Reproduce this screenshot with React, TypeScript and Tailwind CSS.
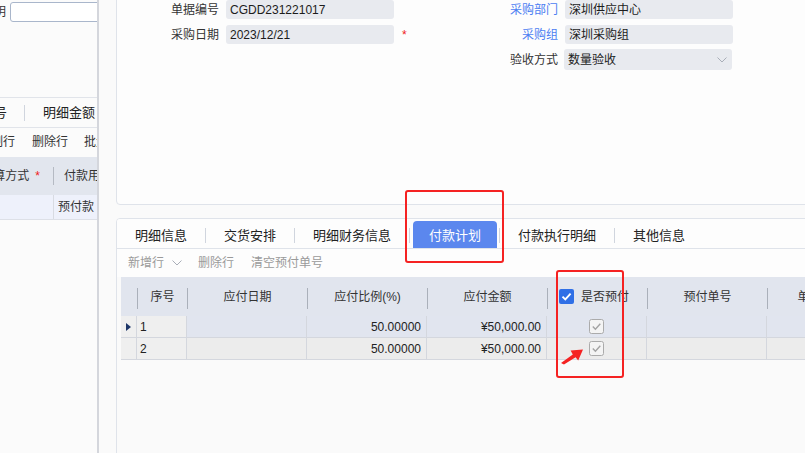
import React from "react";

const F = "font-['Liberation_Sans','Noto_Sans_CJK_SC',sans-serif]";

function Chevron({ className }: { className?: string }) {
  return (
    <svg className={className} width="10" height="6" viewBox="0 0 10 6">
      <polyline points="0.5,0.5 5,5 9.5,0.5" fill="none" stroke="#a9aeb8" strokeWidth="1" />
    </svg>
  );
}

function CheckOn() {
  return (
    <svg width="15" height="15" viewBox="0 0 15 15">
      <rect x="0" y="0" width="15" height="15" rx="2" fill="#2f6fe6" />
      <polyline points="3.5,7.6 6.3,10.4 11.6,4.6" fill="none" stroke="#fff" strokeWidth="1.9" />
    </svg>
  );
}

function CheckDisabled() {
  return (
    <svg width="15" height="15" viewBox="0 0 15 15">
      <rect x="0.5" y="0.5" width="14" height="14" rx="2" fill="#f4f4f4" stroke="#ababab" />
      <polyline points="3.8,7.6 6.4,10.2 11.3,4.8" fill="none" stroke="#a3a3a3" strokeWidth="1.4" />
    </svg>
  );
}

const cols = [16, 50, 120, 120, 120, 100, 120, 120];

function Field({ label, value, blue }: { label: string; value: string; blue?: boolean }) {
  return (
    <>
      <span className={`w-[79px] text-right whitespace-nowrap ${blue ? "text-[#4b7df2]" : "text-[#333]"}`}>{label}</span>
      <div className="ml-[7px] w-[168px] h-[19px] bg-[#e8eaef] rounded-[3px] pl-[4px] flex items-center text-[#1c1c1c] whitespace-nowrap">
        {value}
      </div>
    </>
  );
}

export default function App() {
  const headers = ["", "序号", "应付日期", "应付比例(%)", "应付金额", "CHK", "预付单号", "单据明细号"];
  const rows = [
    { n: "1", pct: "50.00000", amt: "¥50,000.00", sel: true },
    { n: "2", pct: "50.00000", amt: "¥50,000.00", sel: false },
  ];
  return (
    <div className={`relative w-[805px] h-[453px] overflow-hidden flex bg-[#fafafa] text-[12px] text-[#333] ${F}`}>
      {/* Left panel */}
      <div className="w-[99px] shrink-0 h-full border-r-2 border-[#d4d6dc] bg-[#fbfbfb] overflow-hidden">
        <div className="flex items-center h-[20px] mt-[2px] -ml-[19px]">
          <span className="w-[25px] shrink-0 text-right whitespace-nowrap">说明</span>
          <div className="ml-[4px] w-[120px] shrink-0 h-[20px] border border-[#a9b6cb] rounded-[3px] bg-white" />
        </div>
        <div className="mt-[75px] h-[31px] border-y border-[#e1e4ea] flex items-center text-[13px] text-[#222] whitespace-nowrap">
          <span className="-ml-[19px] pr-[17px]">行号</span>
          <span className="w-[1px] h-[16px] bg-[#d0d5de] shrink-0" />
          <span className="pl-[18px]">明细金额</span>
        </div>
        <div className="h-[27px] flex items-center whitespace-nowrap text-[#333]">
          <span className="-ml-[21px]">复制行</span>
          <span className="ml-[17px]">删除行</span>
          <span className="ml-[16px]">批量修改</span>
        </div>
        <div className="mt-[2px] h-[38px] bg-[#e2e6ee] flex items-center whitespace-nowrap">
          <div className="w-[53px] shrink-0 flex justify-end pr-[13px]">
            <span>结算方式</span>
            <span className="ml-[6px] text-[#f02020]">*</span>
          </div>
          <span className="w-[1px] h-[18px] bg-[#b5bac3] shrink-0" />
          <span className="pl-[10px]">付款用途</span>
        </div>
        <div className="h-[25px] bg-[#eef1fb] border-b border-[#dde0e7] flex whitespace-nowrap">
          <div className="w-[54px] shrink-0 border-r border-[#d8dbe2]" />
          <span className="pl-[4px] flex items-center">预付款</span>
        </div>
      </div>

      <div className="w-[17px] shrink-0" />

      {/* Right column */}
      <div className="w-[700px] shrink-0 flex flex-col">
        {/* Top card */}
        <div className="-mt-[6px] h-[211px] border border-[#dfe3ea] rounded-[4px] bg-[#fdfdfd] pt-[5px] pl-[23px] shrink-0">
          <div className="flex items-center h-[19px]">
            <Field label="单据编号" value="CGDD231221017" />
            <span className="w-[85px] shrink-0" />
            <Field label="采购部门" value="深圳供应中心" blue />
          </div>
          <div className="flex items-center h-[19px] mt-[6px]">
            <Field label="采购日期" value="2023/12/21" />
            <span className="w-[85px] shrink-0 pl-[8px] text-[#f02020]">*</span>
            <Field label="采购组" value="深圳采购组" blue />
          </div>
          <div className="flex items-center h-[21px] mt-[5px]">
            <span className="w-[339px] shrink-0" />
            <span className="w-[79px] text-right whitespace-nowrap">验收方式</span>
            <div className="ml-[6px] w-[168px] h-[21px] bg-[#e8eaef] rounded-[3px] pl-[4px] pr-[5px] flex items-center justify-between text-[#1c1c1c]">
              <span>数量验收</span>
              <Chevron />
            </div>
          </div>
        </div>

        {/* Bottom card */}
        <div className="mt-[13px] h-[260px] border border-[#dfe3ea] rounded-t-[4px] bg-[#fafafa] overflow-hidden shrink-0">
          <div className="h-[30px] border-b border-[#dfe3ea] bg-[#fdfdfd] flex items-end text-[13px] text-[#222] whitespace-nowrap">
            <div className="h-[27px] px-[18px] flex items-center pt-[2px]">明细信息</div>
            <span className="w-[1px] h-[15px] mb-[5px] bg-[#d0d5de]" />
            <div className="h-[27px] px-[18px] flex items-center pt-[2px]">交货安排</div>
            <span className="w-[1px] h-[15px] mb-[5px] bg-[#d0d5de]" />
            <div className="h-[27px] px-[18px] flex items-center pt-[2px]">明细财务信息</div>
            <span className="w-[1px] h-[15px] mb-[5px] bg-[#d0d5de]" />
            <div className="h-[27px] ml-[3px] mr-[2px] px-[16px] flex items-center pt-[2px] rounded-t-[4px] bg-[#5b87ee] text-white">付款计划</div>
            <span className="w-[1px] h-[15px] mb-[5px] bg-[#d0d5de]" />
            <div className="h-[27px] px-[18px] flex items-center pt-[2px]">付款执行明细</div>
            <span className="w-[1px] h-[15px] mb-[5px] bg-[#d0d5de]" />
            <div className="h-[27px] px-[18px] flex items-center pt-[2px]">其他信息</div>
          </div>
          <div className="h-[28px] bg-[#fdfdfd] flex items-center pl-[11px] text-[#9a9a9a] whitespace-nowrap">
            <span>新增行</span>
            <Chevron className="ml-[8px]" />
            <span className="ml-[16px]">删除行</span>
            <span className="ml-[17px]">清空预付单号</span>
          </div>
          <div className="ml-[4px] w-[900px]">
            <div className="h-[39px] bg-[#e1e5ee] flex whitespace-nowrap text-[#333]">
              {headers.map((h, i) => (
                <div key={i} style={{ width: cols[i] }} className="shrink-0 flex items-center">
                  {i > 0 && <span className="w-[1px] h-[21px] bg-[#aab0ba] shrink-0 mt-[3px]" />}
                  {h === "CHK" ? (
                    <div className="flex items-center pl-[11px]">
                      <CheckOn />
                      <span className="ml-[7px]">是否预付</span>
                    </div>
                  ) : (
                    <span className="flex-1 text-center">{h}</span>
                  )}
                </div>
              ))}
            </div>
            {rows.map((r, ri) => (
              <div key={ri} className="h-[22px] flex whitespace-nowrap text-[#222]">
                {cols.map((w, i) => {
                  const base = i < 2 ? "bg-[#efefef]" : r.sel ? "bg-[#e1e5ef]" : "bg-[#ececec]";
                  return (
                    <div
                      key={i}
                      style={{ width: w }}
                      className={`shrink-0 border-r border-b border-[#d4d7de] flex items-center ${base}`}
                    >
                      {i === 0 && r.sel && (
                        <svg className="ml-[5px]" width="5" height="8" viewBox="0 0 5 8">
                          <polygon points="0,0 5,4 0,8" fill="#1d3668" />
                        </svg>
                      )}
                      {i === 1 && <span className="pl-[3px]">{r.n}</span>}
                      {i === 3 && <span className="w-full text-right pr-[5px]">{r.pct}</span>}
                      {i === 4 && <span className="w-full text-right pr-[5px]">{r.amt}</span>}
                      {i === 5 && (
                        <div className="w-full flex justify-center">
                          <CheckDisabled />
                        </div>
                      )}
                    </div>
                  );
                })}
              </div>
            ))}
          </div>
        </div>
      </div>

      {/* Red annotations */}
      <div className="absolute left-[405px] top-[190px] w-[99px] h-[73px] border-2 border-[#f52222] rounded-[3px]" />
      <div className="absolute left-[556px] top-[270px] w-[68px] h-[108px] border-2 border-[#f52222] rounded-[3px]" />
      <svg className="absolute left-[558px] top-[346px]" width="28" height="20" viewBox="0 0 28 20">
        <polygon points="3,17 14.8,8.6 12.6,4.6 25,3.5 20.2,14.4 17.6,11.2 6,18.5" fill="#f52222" />
      </svg>
    </div>
  );
}
